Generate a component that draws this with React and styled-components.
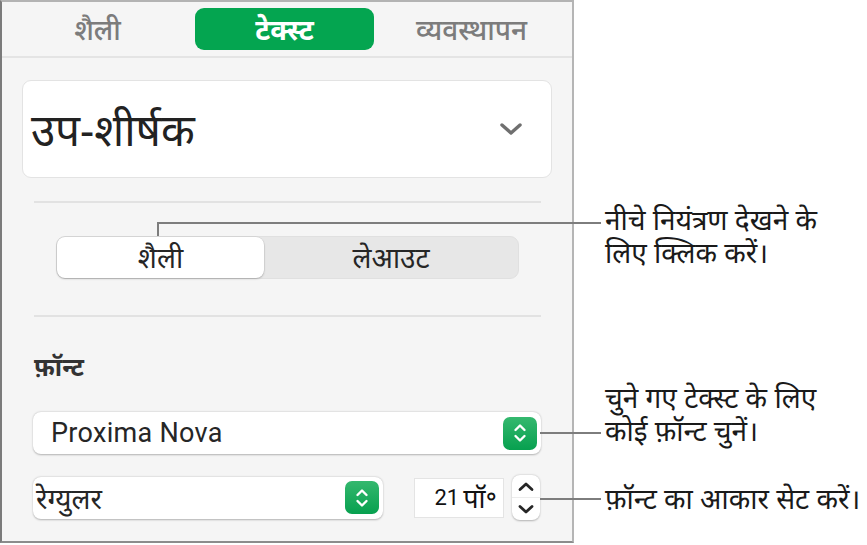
import React from 'react';
import styled, { createGlobalStyle } from 'styled-components';

const Global = createGlobalStyle`
  html, body { margin: 0; padding: 0; background: #ffffff; }
  body { font-family: "Noto Sans", "Noto Sans Devanagari", "Lohit Devanagari", sans-serif; color: #222; }
  * { box-sizing: border-box; }
`;

const Page = styled.div`
  position: relative;
  width: 867px;
  height: 545px;
  display: flex;
  overflow: hidden;
`;

const Panel = styled.div`
  width: 574px;
  height: 543px;
  flex: none;
  background: #f5f5f5;
  border-top: 2px solid #b3b3b3;
  border-left: 2px solid #7b7b7b;
  border-right: 2px solid #b5b5b5;
  border-bottom: 2px solid #8c8c8c;
  display: flex;
  flex-direction: column;
`;

const TabBar = styled.div`
  height: 56px;
  flex: none;
  display: flex;
  align-items: center;
  gap: 8px;
  padding: 0 0 0 6px;
  border-bottom: 2px solid #e4e4e4;
`;

const Tab = styled.div`
  width: 179px;
  height: 42px;
  border-radius: 9px;
  display: flex;
  align-items: center;
  justify-content: center;
  font-size: 28px;
  line-height: 42px;
  font-weight: ${p => (p.$active ? 700 : 500)};
  color: ${p => (p.$active ? '#ffffff' : '#7c7c7c')};
  background: ${p => (p.$active ? '#04a550' : 'transparent')};
`;

const Content = styled.div`
  padding: 0 20px;
  display: flex;
  flex-direction: column;
`;

const StyleBox = styled.div`
  margin-top: 22px;
  height: 98px;
  background: #ffffff;
  border: 1px solid #e3e3e3;
  border-radius: 9px;
  display: flex;
  align-items: center;
  justify-content: space-between;
  padding: 0 28px 0 8px;
`;

const StyleName = styled.div`
  font-size: 44px;
  line-height: 60px;
  color: #222;
  font-weight: 400;
`;

const Divider = styled.div`
  height: 2px;
  background: #e2e2e2;
  margin: ${p => p.$top}px 11px 0 12px;
`;

const Segmented = styled.div`
  margin: 33px 33px 0 34px;
  height: 43px;
  border-radius: 9px;
  background: #e7e7e7;
  border: 1px solid #e0e0e0;
  display: flex;
`;

const Segment = styled.div`
  flex: ${p => (p.$selected ? '0 0 207px' : '1')};
  border-radius: 8px;
  display: flex;
  align-items: center;
  justify-content: center;
  font-size: 28px;
  line-height: 41px;
  color: #262626;
  background: ${p => (p.$selected ? '#ffffff' : 'transparent')};
  box-shadow: ${p => (p.$selected ? '0 1px 2px rgba(0,0,0,0.22), 0 0 0 0.5px rgba(0,0,0,0.08)' : 'none')};
`;

const Label = styled.div`
  margin: 35px 0 0 12px;
  height: 28px;
  line-height: 28px;
  font-size: 25px;
  font-weight: 700;
  color: #333;
`;

const Popup = styled.div`
  height: 42px;
  width: ${p => p.$w}px;
  background: #ffffff;
  border-radius: 8px;
  box-shadow: 0 0.5px 2px rgba(0,0,0,0.28);
  display: flex;
  align-items: center;
  justify-content: space-between;
  padding: 0 4px 0 ${p => p.$pl}px;
  font-size: ${p => p.$fs}px;
  line-height: 42px;
  letter-spacing: ${p => (p.$latin ? '0.3px' : '0')};
  font-family: ${p => (p.$latin ? 'Roboto, "Liberation Sans", sans-serif' : 'inherit')};
  color: #262626;
`;

const FontRow = styled.div`
  margin: 32px 0 0 11px;
`;

const SizeRow = styled.div`
  margin: 21px 0 0 11px;
  height: 45px;
  display: flex;
  align-items: center;
`;

const GreenButton = styled.div`
  width: 34px;
  height: 33px;
  border-radius: 7px;
  background: linear-gradient(#34b86e, #07a04f);
  display: flex;
  align-items: center;
  justify-content: center;
`;

const SizeField = styled.div`
  margin-left: 31px;
  width: 90px;
  height: 40px;
  background: #ffffff;
  border: 1px solid #e4e4e4;
  display: flex;
  align-items: center;
  justify-content: flex-end;
  padding-right: 6px;
  font-size: 27px;
  line-height: 38px;
  color: #111;
`;

const Num = styled.span`
  font-family: Roboto, "Liberation Sans", sans-serif;
  font-size: 22px;
  margin-right: 4px;
`;

const Stepper = styled.div`
  margin-left: 8px;
  width: 28px;
  height: 45px;
  background: #ffffff;
  border-radius: 8px;
  box-shadow: 0 0.5px 2px rgba(0,0,0,0.28);
  display: flex;
  flex-direction: column;
`;

const StepHalf = styled.div`
  flex: 1;
  display: flex;
  align-items: center;
  justify-content: center;
  border-top: ${p => (p.$lower ? '1px solid #ececec' : 'none')};
`;

const Notes = styled.div`
  flex: 1;
  padding: 203px 0 0 31px;
  display: flex;
  flex-direction: column;
`;

const Note = styled.div`
  margin-top: ${p => p.$top}px;
  font-size: 28px;
  line-height: 33px;
  color: #1a1a1a;
  white-space: nowrap;
`;

const Leader = styled.div`
  position: absolute;
  background: #7d7d7d;
  left: ${p => p.$x}px;
  top: ${p => p.$y}px;
  width: ${p => p.$w}px;
  height: ${p => p.$h}px;
`;

const Chevron = () => (
  <svg width="24" height="14" viewBox="0 0 24 14">
    <path d="M3 3 L12 11 L21 3" fill="none" stroke="#6f6f6f" strokeWidth="3.4" strokeLinecap="round" strokeLinejoin="round" />
  </svg>
);

const UpDown = ({ color = '#fff' }) => (
  <svg width="16" height="22" viewBox="0 0 16 22">
    <path d="M3.5 8 L8 3.5 L12.5 8" fill="none" stroke={color} strokeWidth="2.4" strokeLinecap="round" strokeLinejoin="round" />
    <path d="M3.5 14 L8 18.5 L12.5 14" fill="none" stroke={color} strokeWidth="2.4" strokeLinecap="round" strokeLinejoin="round" />
  </svg>
);

const Arrow = ({ up }) => (
  <svg width="18" height="11" viewBox="0 0 18 11">
    <path d={up ? 'M3 8.5 L9 3 L15 8.5' : 'M3 2.5 L9 8 L15 2.5'} fill="none" stroke="#262626" strokeWidth="2.8" strokeLinecap="round" strokeLinejoin="round" />
  </svg>
);

export default function App() {
  return (
    <>
      <Global />
      <Page>
        <Panel>
          <TabBar>
            <Tab>शैली</Tab>
            <Tab $active>टेक्स्ट</Tab>
            <Tab>व्यवस्थापन</Tab>
          </TabBar>
          <Content>
            <StyleBox>
              <StyleName>उप-शीर्षक</StyleName>
              <Chevron />
            </StyleBox>
            <Divider $top={23} />
            <Segmented>
              <Segment $selected>शैली</Segment>
              <Segment>लेआउट</Segment>
            </Segmented>
            <Divider $top={36} />
            <Label>फ़ॉन्ट</Label>
            <FontRow>
              <Popup $w={508} $pl={18} $fs={27} $latin>
                Proxima Nova
                <GreenButton><UpDown /></GreenButton>
              </Popup>
            </FontRow>
            <SizeRow>
              <Popup $w={350} $pl={3} $fs={28}>
                रेग्युलर
                <GreenButton><UpDown /></GreenButton>
              </Popup>
              <SizeField><Num>21</Num>पॉ॰</SizeField>
              <Stepper>
                <StepHalf><Arrow up /></StepHalf>
                <StepHalf $lower><Arrow /></StepHalf>
              </Stepper>
            </SizeRow>
          </Content>
        </Panel>
        <Notes>
          <Note $top={0}>नीचे नियंत्रण देखने के<br />लिए क्लिक करें।</Note>
          <Note $top={112}>चुने गए टेक्स्ट के लिए<br />कोई फ़ॉन्ट चुनें।</Note>
          <Note $top={35}>फ़ॉन्ट का आकार सेट करें।</Note>
        </Notes>
        <Leader $x={157} $y={222} $w={444} $h={2} />
        <Leader $x={157} $y={222} $w={2} $h={14} />
        <Leader $x={540} $y={432} $w={61} $h={2} />
        <Leader $x={540} $y={498} $w={61} $h={2} />
      </Page>
    </>
  );
}
